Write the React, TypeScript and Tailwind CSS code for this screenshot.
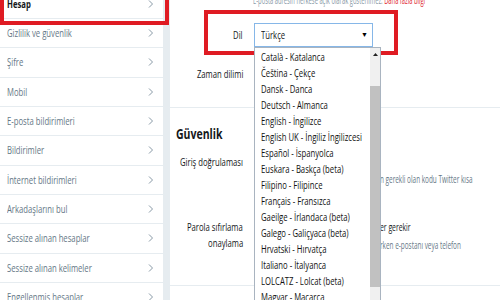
import React from "react";

const side = [
  "Gizlilik ve güvenlik",
  "Şifre",
  "Mobil",
  "E-posta bildirimleri",
  "Bildirimler",
  "İnternet bildirimleri",
  "Arkadaşlarını bul",
  "Sessize alınan hesaplar",
  "Sessize alınan kelimeler",
  "Engellenmiş hesaplar",
];

const langs = [
  "Català - Katalanca",
  "Čeština - Çekçe",
  "Dansk - Danca",
  "Deutsch - Almanca",
  "English - İngilizce",
  "English UK - İngiliz İngilizcesi",
  "Español - İspanyolca",
  "Euskara - Baskça (beta)",
  "Filipino - Filipince",
  "Français - Fransızca",
  "Gaeilge - İrlandaca (beta)",
  "Galego - Galiçyaca (beta)",
  "Hrvatski - Hırvatça",
  "Italiano - İtalyanca",
  "LOLCATZ - Lolcat (beta)",
  "Magyar - Macarca",
  "Nederlands - Felemenkçe",
];

function Chevron() {
  return (
    <svg width="6" height="10" viewBox="0 0 6 10" className="shrink-0">
      <path d="M1 1.5 L4.5 5 L1 8.5" fill="none" stroke="#8899a6" strokeWidth="1" />
    </svg>
  );
}

function L({ children }: { children: React.ReactNode }) {
  return <span className="inline-block whitespace-nowrap origin-left scale-x-[0.7]">{children}</span>;
}

function R({ children }: { children: React.ReactNode }) {
  return <span className="inline-block whitespace-nowrap origin-right scale-x-[0.7]">{children}</span>;
}

export default function App() {
  return (
    <div className="relative w-[500px] h-[300px] overflow-hidden bg-[#e6ecf0] flex font-['Open_Sans',sans-serif]">
      <aside className="w-[163px] shrink-0 self-start bg-white mt-[-10.33px]">
        <div className="h-[29.33px] border-b border-[#e6ecf0] flex items-center justify-between pl-[7px] pr-[9px] text-[11px] font-bold text-[#14171a]">
          <L>Hesap</L>
          <Chevron />
        </div>
        {side.map((s) => (
          <div
            key={s}
            className="h-[29.33px] border-b border-[#e6ecf0] flex items-center justify-between pl-[7px] pr-[9px] text-[11px] text-[#657786]"
          >
            <L>{s}</L>
            <Chevron />
          </div>
        ))}
      </aside>

      <main className="ml-[7px] flex-1 bg-white flex flex-col">
        <div className="mt-[-7px] h-[14px] pl-[83px] text-[10px] leading-[14px] text-[#8899a6] whitespace-nowrap">
          <span className="inline-block whitespace-nowrap origin-left scale-x-[0.58]">
            E-posta adresin herkese açık olarak gösterilmez.{" "}
            <span className="text-[#e0242c]">Daha fazla bilgi</span>
          </span>
        </div>

        <div className="mt-[16px] h-[24px] flex items-center">
          <div className="w-[73px] flex justify-end text-[11px] text-[#14171a]">
            <R>Dil</R>
          </div>
          <div className="relative ml-[11px] w-[119px] h-[24px] border border-[#86b7e8] bg-white flex items-center justify-between pl-[6px] pr-[4px] text-[11px] text-[#14171a]">
            <L>Türkçe</L>
            <span className="text-[7px] text-black">▼</span>
            <div className="absolute z-10 left-[-1px] top-[23px] w-[127px] h-[262px] border border-[#a9b4c0] bg-white pt-px">
              {langs.map((l) => (
                <div key={l} className="h-[16px] leading-[16px] pl-[6px] text-[11px] text-[#111]">
                  <L>{l}</L>
                </div>
              ))}
              <div className="absolute right-0 top-0 bottom-0 w-[10px] bg-[#f0f0f0]">
                <div className="flex justify-center pt-[5px]">
                  <svg width="5" height="3" viewBox="0 0 5 3">
                    <path d="M0 3 L2.5 0 L5 3 Z" fill="#222" />
                  </svg>
                </div>
                <div className="absolute left-0 right-0 top-[38px] h-[201px] bg-[#c1c1c1]" />
              </div>
            </div>
          </div>
        </div>

        <div className="mt-[15px] h-[24px] flex items-center">
          <div className="w-[73px] flex justify-end text-[11px] text-[#14171a]">
            <R>Zaman dilimi</R>
          </div>
        </div>

        <div className="mt-[21px] h-px bg-[#e6ecf0]" />

        <div className="mt-[15px] pl-[6px] text-[15px] leading-[20px] font-bold text-[#14171a]">
          <L>Güvenlik</L>
        </div>

        <div className="mt-[11px] flex">
          <div className="w-[73px] flex justify-end text-[11px] leading-[16px] text-[#14171a]">
            <R>Giriş doğrulaması</R>
          </div>
          <div className="ml-[137px] flex-1 flex flex-col">
            <div className="h-[16px]" />
            <div className="mt-[2px] text-[10px] leading-[14px] text-[#657786] whitespace-nowrap">
              <span className="inline-block origin-left scale-x-[0.64]">n gerekli olan kodu Twitter kısa</span>
            </div>
          </div>
        </div>

        <div className="mt-[33px] flex">
          <div className="w-[73px] flex flex-col items-end text-[11px] leading-[16px] text-[#14171a]">
            <R>Parola sıfırlama</R>
            <R>onaylama</R>
          </div>
          <div className="ml-[137px] flex-1 flex flex-col">
            <div className="text-[11px] leading-[16px] text-[#14171a] whitespace-nowrap">
              <span className="inline-block origin-left scale-x-[0.62]">er gerekir</span>
            </div>
            <div className="mt-[3px] text-[10px] leading-[14px] text-[#657786] whitespace-nowrap">
              <span className="inline-block origin-left scale-x-[0.64]">rken e-postanı veya telefon</span>
            </div>
          </div>
        </div>

        <div className="mt-[33px] h-px bg-[#e6ecf0]" />
      </main>

      <div className="absolute left-0 top-[-4px] w-[169px] h-[29px] border-4 border-[#df1b23]" />
      <div className="absolute left-[204px] top-[10px] w-[194px] h-[45px] border-4 border-[#df1b23]" />
    </div>
  );
}
